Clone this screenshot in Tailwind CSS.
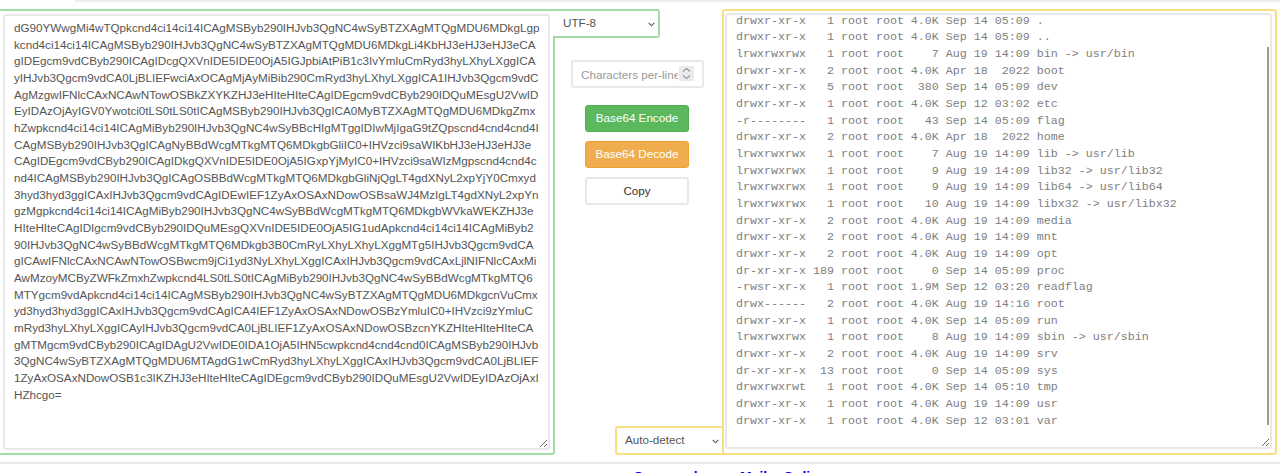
<!DOCTYPE html>
<html lang="en">
<head>
  <meta charset="UTF-8" />
  <meta name="viewport" content="width=device-width, initial-scale=1.0" />
  <title>Base64</title>
  <script src="https://cdn.jsdelivr.net/npm/@tailwindcss/browser@4"></script>
</head>

<body class="bg-white h-[473px] overflow-hidden font-['Liberation_Sans',sans-serif] text-[11.67px] leading-[16.67px] text-[#555]">
  <div class="ml-[75px] h-[2px] bg-[#eeeeee]"></div>

  <main class="flex mt-[7px] h-[446px]">
    <!-- Input -->
    <section class="w-[555px] shrink-0 border-2 border-l-0 border-[#a5dba5] rounded-br-[3px] p-[3px]">
      <textarea wrap="off" class="block w-[547px] h-[436px] border-2 border-[#e8e8e8] rounded-[3px] px-[9px] pt-[4px] pb-[6px] overflow-hidden text-[#555] outline-none">dG90YWwgMi4wTQpkcnd4ci14ci14ICAgMSByb290IHJvb3QgNC4wSyBTZXAgMTQgMDU6MDkgLgp
kcnd4ci14ci14ICAgMSByb290IHJvb3QgNC4wSyBTZXAgMTQgMDU6MDkgLi4KbHJ3eHJ3eHJ3eCA
gIDEgcm9vdCByb290ICAgIDcgQXVnIDE5IDE0OjA5IGJpbiAtPiB1c3IvYmluCmRyd3hyLXhyLXggICA
yIHJvb3Qgcm9vdCA0LjBLIEFwciAxOCAgMjAyMiBib290CmRyd3hyLXhyLXggICA1IHJvb3Qgcm9vdC
AgMzgwIFNlcCAxNCAwNTowOSBkZXYKZHJ3eHIteHIteCAgIDEgcm9vdCByb290IDQuMEsgU2VwID
EyIDAzOjAyIGV0Ywotci0tLS0tLS0tICAgMSByb290IHJvb3QgICA0MyBTZXAgMTQgMDU6MDkgZmx
hZwpkcnd4ci14ci14ICAgMiByb290IHJvb3QgNC4wSyBBcHIgMTggIDIwMjIgaG9tZQpscnd4cnd4cnd4I
CAgMSByb290IHJvb3QgICAgNyBBdWcgMTkgMTQ6MDkgbGliIC0+IHVzci9saWIKbHJ3eHJ3eHJ3e
CAgIDEgcm9vdCByb290ICAgIDkgQXVnIDE5IDE0OjA5IGxpYjMyIC0+IHVzci9saWIzMgpscnd4cnd4c
nd4ICAgMSByb290IHJvb3QgICAgOSBBdWcgMTkgMTQ6MDkgbGliNjQgLT4gdXNyL2xpYjY0Cmxyd
3hyd3hyd3ggICAxIHJvb3Qgcm9vdCAgIDEwIEF1ZyAxOSAxNDowOSBsaWJ4MzIgLT4gdXNyL2xpYn
gzMgpkcnd4ci14ci14ICAgMiByb290IHJvb3QgNC4wSyBBdWcgMTkgMTQ6MDkgbWVkaWEKZHJ3e
HIteHIteCAgIDIgcm9vdCByb290IDQuMEsgQXVnIDE5IDE0OjA5IG1udApkcnd4ci14ci14ICAgMiByb2
90IHJvb3QgNC4wSyBBdWcgMTkgMTQ6MDkgb3B0CmRyLXhyLXhyLXggMTg5IHJvb3Qgcm9vdCA
gICAwIFNlcCAxNCAwNTowOSBwcm9jCi1yd3NyLXhyLXggICAxIHJvb3Qgcm9vdCAxLjlNIFNlcCAxMi
AwMzoyMCByZWFkZmxhZwpkcnd4LS0tLS0tICAgMiByb290IHJvb3QgNC4wSyBBdWcgMTkgMTQ6
MTYgcm9vdApkcnd4ci14ci14ICAgMSByb290IHJvb3QgNC4wSyBTZXAgMTQgMDU6MDkgcnVuCmx
yd3hyd3hyd3ggICAxIHJvb3Qgcm9vdCAgICA4IEF1ZyAxOSAxNDowOSBzYmluIC0+IHVzci9zYmluC
mRyd3hyLXhyLXggICAyIHJvb3Qgcm9vdCA0LjBLIEF1ZyAxOSAxNDowOSBzcnYKZHIteHIteHIteCA
gMTMgcm9vdCByb290ICAgIDAgU2VwIDE0IDA1OjA5IHN5cwpkcnd4cnd4cnd0ICAgMSByb290IHJvb
3QgNC4wSyBTZXAgMTQgMDU6MTAgdG1wCmRyd3hyLXhyLXggICAxIHJvb3Qgcm9vdCA0LjBLIEF
1ZyAxOSAxNDowOSB1c3IKZHJ3eHIteHIteCAgIDEgcm9vdCByb290IDQuMEsgU2VwIDEyIDAzOjAxI
HZhcgo=</textarea>
    </section>

    <!-- Controls -->
    <section class="w-[167px] shrink-0 flex flex-col">
      <div class="relative -ml-[2px] w-[107px] h-[29px] shrink-0">
        <select class="appearance-none block w-full h-full pl-[10px] pr-[16px] bg-white border-2 border-l-0 border-[#a5dba5] rounded-r-[3px] text-[#555] outline-none">
          <option>UTF-8</option>
        </select>
        <svg class="absolute right-[5px] top-[13px] pointer-events-none" width="7" height="5" viewBox="0 0 7 5" fill="none" stroke="#555" stroke-width="1.1"><path d="M0.7 0.8 L3.5 3.8 L6.3 0.8" /></svg>
      </div>

      <div class="relative ml-[16px] mt-[22px] w-[133px]">
        <input type="text" placeholder="Characters per-line" class="block w-full h-[28px] border-2 border-[#e8e8e8] rounded-[3px] pl-[8px] pr-[24px] outline-none placeholder:text-[#999]" />
        <span class="absolute right-[10px] top-[6px] w-[15px] h-[15px] bg-[#e9e9ee] flex items-center justify-center">
          <svg width="9" height="13" viewBox="0 0 9 13" fill="none" stroke="#666" stroke-width="1">
            <path d="M1 4.5 L4.5 1.5 L8 4.5" />
            <path d="M1 8.5 L4.5 11.5 L8 8.5" />
          </svg>
        </span>
      </div>

      <div class="ml-[30px] mt-[17px] w-[104px] flex flex-col gap-[9px]">
        <button class="h-[27px] bg-[#5cb85c] border border-[#4cae4c] rounded-[3px] text-white">Base64 Encode</button>
        <button class="h-[27px] bg-[#f0ad4e] border border-[#eea236] rounded-[3px] text-white">Base64 Decode</button>
        <button class="h-[28px] bg-white border-2 border-[#e8e8e8] rounded-[3px] text-[#333]">Copy</button>
      </div>

      <div class="relative mt-auto ml-auto -mr-[2px] w-[109px] h-[29px] shrink-0">
        <select class="appearance-none block w-full h-full pl-[8px] pr-[16px] bg-white border-2 border-r-0 border-[#f7df82] rounded-l-[3px] text-[#555] outline-none">
          <option>Auto-detect</option>
        </select>
        <svg class="absolute right-[5px] top-[13px] pointer-events-none" width="7" height="5" viewBox="0 0 7 5" fill="none" stroke="#555" stroke-width="1.1"><path d="M0.7 0.8 L3.5 3.8 L6.3 0.8" /></svg>
      </div>
    </section>

    <!-- Output -->
    <section class="relative w-[555px] shrink-0 border-2 border-[#f7df82] rounded-[3px] pt-[2px] pl-[1px]">
      <textarea id="output" wrap="off" class="block w-[547px] h-[436px] border-2 border-[#e8e8e8] rounded-[3px] pl-[9px] pr-[9px] py-[5px] overflow-hidden font-['Liberation_Mono',monospace] text-[#808080] outline-none">total 2.0M
drwxr-xr-x   1 root root 4.0K Sep 14 05:09 .
drwxr-xr-x   1 root root 4.0K Sep 14 05:09 ..
lrwxrwxrwx   1 root root    7 Aug 19 14:09 bin -> usr/bin
drwxr-xr-x   2 root root 4.0K Apr 18  2022 boot
drwxr-xr-x   5 root root  380 Sep 14 05:09 dev
drwxr-xr-x   1 root root 4.0K Sep 12 03:02 etc
-r--------   1 root root   43 Sep 14 05:09 flag
drwxr-xr-x   2 root root 4.0K Apr 18  2022 home
lrwxrwxrwx   1 root root    7 Aug 19 14:09 lib -> usr/lib
lrwxrwxrwx   1 root root    9 Aug 19 14:09 lib32 -> usr/lib32
lrwxrwxrwx   1 root root    9 Aug 19 14:09 lib64 -> usr/lib64
lrwxrwxrwx   1 root root   10 Aug 19 14:09 libx32 -> usr/libx32
drwxr-xr-x   2 root root 4.0K Aug 19 14:09 media
drwxr-xr-x   2 root root 4.0K Aug 19 14:09 mnt
drwxr-xr-x   2 root root 4.0K Aug 19 14:09 opt
dr-xr-xr-x 189 root root    0 Sep 14 05:09 proc
-rwsr-xr-x   1 root root 1.9M Sep 12 03:20 readflag
drwx------   2 root root 4.0K Aug 19 14:16 root
drwxr-xr-x   1 root root 4.0K Sep 14 05:09 run
lrwxrwxrwx   1 root root    8 Aug 19 14:09 sbin -> usr/sbin
drwxr-xr-x   2 root root 4.0K Aug 19 14:09 srv
dr-xr-xr-x  13 root root    0 Sep 14 05:09 sys
drwxrwxrwt   1 root root 4.0K Sep 14 05:10 tmp
drwxr-xr-x   1 root root 4.0K Aug 19 14:09 usr
drwxr-xr-x   1 root root 4.0K Sep 12 03:01 var


</textarea>
      <span class="absolute right-[6px] top-[36px] bottom-[28px] w-[2px] bg-[#999]"></span>
    </section>
  </main>

  <div class="h-[2px] bg-[#e8e8e8] mt-[7px]"></div>
  <footer class="flex mt-[6px] ml-[633px] text-[14px] leading-[14px] font-bold text-[#0000ee]">
    <a href="#" class="w-[107px]">Open code</a>
    <a href="#" class="w-[43px]">Mail</a>
    <a href="#">Online</a>
  </footer>

  <script>
    document.getElementById('output').scrollTop = 24;
  </script>
</body>
</html>
